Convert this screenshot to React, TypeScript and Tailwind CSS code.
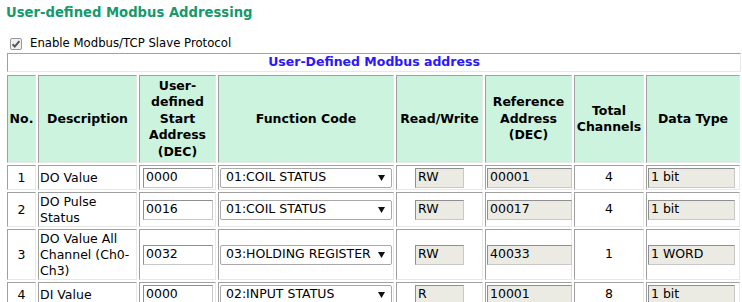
import React from "react";

const cellB =
  "border border-t-[#a0a0a0] border-l-[#a0a0a0] border-r-[#e8e8e8] border-b-[#e8e8e8]";

function Input({ value, ro, w }: { value: string; ro?: boolean; w: string }) {
  return (
    <div
      className={`${w} h-[20px] flex items-center pl-[2px] border border-t-[#8f8f8f] border-l-[#8f8f8f] border-r-[#c8c8c8] border-b-[#c8c8c8] ${
        ro ? "bg-[#ebebe4]" : "bg-white"
      } text-[12.5px] leading-none text-black`}
    >
      {value}
    </div>
  );
}

function Select({ value }: { value: string }) {
  return (
    <div className="w-[172px] h-[20px] flex items-center justify-between pl-[5px] pr-[6px] border border-[#a9a9a9] rounded-[2px] bg-white text-[12.5px] leading-none text-black">
      <span>{value}</span>
      <svg width="7" height="6" viewBox="0 0 7 6">
        <polygon points="0,0 7,0 3.5,6" fill="#111" />
      </svg>
    </div>
  );
}

const rows = [
  { no: "1", desc: "DO Value", start: "0000", fc: "01:COIL STATUS", rw: "RW", ref: "00001", total: "4", type: "1 bit", h: "h-[25px]" },
  { no: "2", desc: "DO Pulse Status", start: "0016", fc: "01:COIL STATUS", rw: "RW", ref: "00017", total: "4", type: "1 bit", h: "h-[35px]" },
  { no: "3", desc: "DO Value All Channel (Ch0-Ch3)", start: "0032", fc: "03:HOLDING REGISTER", rw: "RW", ref: "40033", total: "1", type: "1 WORD", h: "h-[51px]" },
  { no: "4", desc: "DI Value", start: "0000", fc: "02:INPUT STATUS", rw: "R", ref: "10001", total: "8", type: "1 bit", h: "h-[25px]" },
];

export default function App() {
  return (
    <div className="w-[742px] h-[302px] overflow-hidden bg-white text-black" style={{ fontFamily: '"DejaVu Sans", Verdana, sans-serif' }}>
      <div className="pl-[6px] pt-[4px] text-[13.2px] font-bold text-[#16996b] leading-[18px]">
        User-defined Modbus Addressing
      </div>
      <div className="flex items-center pl-[10px] mt-[15px] h-[14px] text-[11.7px]">
        <svg width="12" height="12" viewBox="0 0 12 12" className="mr-[8px]">
          <rect x="0.5" y="0.5" width="11" height="11" rx="1.5" fill="#f0f0f0" stroke="#9a9a9a" />
          <path d="M2.6 6.2 L4.8 8.6 L9.4 3.2" stroke="#555" strokeWidth="2" fill="none" />
        </svg>
        <span>Enable Modbus/TCP Slave Protocol</span>
      </div>
      <div className={`ml-[7px] mt-[2px] w-[734px] h-[19px] ${cellB} flex items-center justify-center text-[12.5px] font-bold text-[#2a17ff]`}>
        User-Defined Modbus address
      </div>
      <table className="ml-[5px] mt-[1px] border-separate border-spacing-[2px] text-[12.5px] table-fixed w-[737px]">
        <colgroup>
          <col className="w-[29px]" />
          <col className="w-[99px]" />
          <col className="w-[77px]" />
          <col className="w-[176px]" />
          <col className="w-[87px]" />
          <col className="w-[87px]" />
          <col className="w-[70px]" />
          <col className="w-[94px]" />
        </colgroup>
        <thead>
          <tr className="h-[88px]">
            {[
              "No.",
              "Description",
              "User-defined Start Address (DEC)",
              "Function Code",
              "Read/Write",
              "Reference Address (DEC)",
              "Total Channels",
              "Data Type",
            ].map((t, i) => (
              <th
                key={i}
                className={`${cellB} bg-[#ccf3de] font-bold text-center leading-[16.5px] px-[1px] ${i === 2 ? "px-[8px]" : ""}`}
              >
                {t}
              </th>
            ))}
          </tr>
        </thead>
        <tbody>
          {rows.map((r) => (
            <tr key={r.no} className={r.h}>
              <td className={`${cellB} text-center leading-[16px]`}>{r.no}</td>
              <td className={`${cellB} pl-[1px] leading-[16px]`}>{r.desc}</td>
              <td className={`${cellB} pl-[3px]`}>
                <Input value={r.start} w="w-[70px]" />
              </td>
              <td className={`${cellB} pl-[1px]`}>
                <Select value={r.fc} />
              </td>
              <td className={`${cellB}`}>
                <div className="flex justify-center">
                  <Input value={r.rw} ro w="w-[49px]" />
                </div>
              </td>
              <td className={`${cellB} pl-[1px]`}>
                <Input value={r.ref} ro w="w-[85px]" />
              </td>
              <td className={`${cellB} text-center`}>{r.total}</td>
              <td className={`${cellB} pl-[1px]`}>
                <Input value={r.type} ro w="w-[87px]" />
              </td>
            </tr>
          ))}
        </tbody>
      </table>
    </div>
  );
}
